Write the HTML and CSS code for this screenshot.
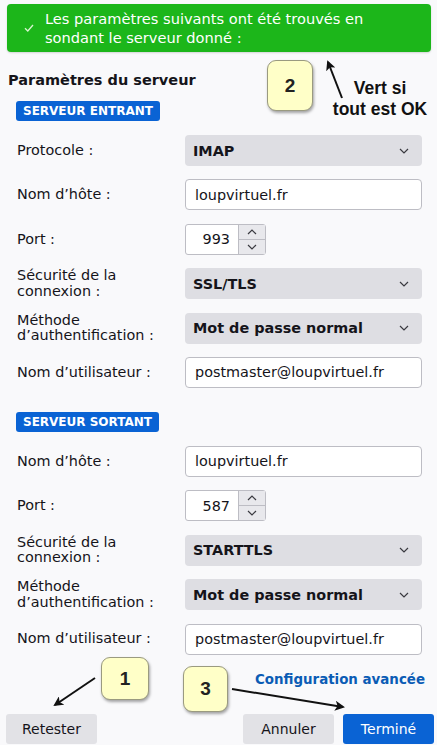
FILE: index.html
```html
<!DOCTYPE html>
<html lang="fr">
<head>
<meta charset="utf-8">
<link rel="stylesheet" href="styles.css">
</head>
<body>
<div class="page">
  <div class="banner">
    <svg class="check" width="10" height="8" viewBox="0 0 10 8"><path d="M1 4.2 L3.8 7 L9 1" fill="none" stroke="#d8f5d0" stroke-width="1.3"/></svg>
    <div class="banner-text">Les paramètres suivants ont été trouvés en<br>sondant le serveur donné :</div>
  </div>

  <h2 class="heading">Paramètres du serveur</h2>

  <div class="badge">SERVEUR ENTRANT</div>
  <div class="grid">
    <div class="label">Protocole :</div>
    <div class="select"><span>IMAP</span><svg class="chev" width="10" height="6" viewBox="0 0 10 6"><path d="M1 1 L5 5 L9 1" fill="none" stroke="#3a3a40" stroke-width="1.2"/></svg></div>

    <div class="label">Nom d’hôte :</div>
    <div class="input">loupvirtuel.fr</div>

    <div class="label">Port :</div>
    <div class="spin"><span class="spin-val">993</span><span class="spin-btns"><span class="sb"><svg width="10" height="6" viewBox="0 0 10 6"><path d="M1 5 L5 1 L9 5" fill="none" stroke="#3a3a40" stroke-width="1.2"/></svg></span><span class="sb"><svg width="10" height="6" viewBox="0 0 10 6"><path d="M1 1 L5 5 L9 1" fill="none" stroke="#3a3a40" stroke-width="1.2"/></svg></span></span></div>

    <div class="label">Sécurité de la<br>connexion :</div>
    <div class="select"><span>SSL/TLS</span><svg class="chev" width="10" height="6" viewBox="0 0 10 6"><path d="M1 1 L5 5 L9 1" fill="none" stroke="#3a3a40" stroke-width="1.2"/></svg></div>

    <div class="label">Méthode<br>d’authentification :</div>
    <div class="select"><span>Mot de passe normal</span><svg class="chev" width="10" height="6" viewBox="0 0 10 6"><path d="M1 1 L5 5 L9 1" fill="none" stroke="#3a3a40" stroke-width="1.2"/></svg></div>

    <div class="label">Nom d’utilisateur :</div>
    <div class="input">postmaster@loupvirtuel.fr</div>
  </div>

  <div class="badge badge-out">SERVEUR SORTANT</div>
  <div class="grid">
    <div class="label">Nom d’hôte :</div>
    <div class="input">loupvirtuel.fr</div>

    <div class="label">Port :</div>
    <div class="spin"><span class="spin-val">587</span><span class="spin-btns"><span class="sb"><svg width="10" height="6" viewBox="0 0 10 6"><path d="M1 5 L5 1 L9 5" fill="none" stroke="#3a3a40" stroke-width="1.2"/></svg></span><span class="sb"><svg width="10" height="6" viewBox="0 0 10 6"><path d="M1 1 L5 5 L9 1" fill="none" stroke="#3a3a40" stroke-width="1.2"/></svg></span></span></div>

    <div class="label">Sécurité de la<br>connexion :</div>
    <div class="select"><span>STARTTLS</span><svg class="chev" width="10" height="6" viewBox="0 0 10 6"><path d="M1 1 L5 5 L9 1" fill="none" stroke="#3a3a40" stroke-width="1.2"/></svg></div>

    <div class="label">Méthode<br>d’authentification :</div>
    <div class="select"><span>Mot de passe normal</span><svg class="chev" width="10" height="6" viewBox="0 0 10 6"><path d="M1 1 L5 5 L9 1" fill="none" stroke="#3a3a40" stroke-width="1.2"/></svg></div>

    <div class="label">Nom d’utilisateur :</div>
    <div class="input">postmaster@loupvirtuel.fr</div>
  </div>

  <div class="advanced"><a class="adv-link">Configuration avancée</a></div>

  <div class="footer">
    <button class="btn">Retester</button>
    <div class="spacer"></div>
    <button class="btn">Annuler</button>
    <button class="btn btn-primary">Terminé</button>
  </div>

  <div class="callout c2">2</div>
  <div class="note">Vert si<br>tout est OK</div>
  <div class="callout c1">1</div>
  <div class="callout c3">3</div>

  <svg class="arrows" width="437" height="745" viewBox="0 0 437 745">
    <defs>
      <marker id="ah" markerWidth="10" markerHeight="10" refX="8" refY="5" orient="auto" markerUnits="userSpaceOnUse">
        <path d="M0 0 L10 5 L0 10 L2.5 5 Z" fill="#111"/>
      </marker>
    </defs>
    <line x1="342" y1="98" x2="328" y2="62" stroke="#111" stroke-width="2" marker-end="url(#ah)"/>
    <line x1="95" y1="678" x2="55" y2="705" stroke="#111" stroke-width="2" marker-end="url(#ah)"/>
    <line x1="232" y1="689" x2="343" y2="707" stroke="#111" stroke-width="2" marker-end="url(#ah)"/>
  </svg>
</div>
</body>
</html>
```

FILE: styles.css
```css
html, body {
  margin: 0;
  padding: 0;
}
body {
  background: #f9f9fb;
  font-family: "DejaVu Sans", sans-serif;
  font-size: 14.4px;
  color: #15141a;
}
.page {
  position: relative;
  width: 437px;
  height: 745px;
  overflow: hidden;
}
.banner {
  margin: 4px 6px 0 7px;
  height: 48px;
  box-sizing: border-box;
  background: #1cb61a;
  border-radius: 4px;
  display: flex;
  align-items: center;
  color: #fff;
  box-shadow: 0 1px 2px rgba(0,0,0,0.15);
}
.check {
  margin-left: 17px;
  margin-right: 11px;
  flex: none;
}
.banner-text {
  font-size: 14.6px;
  line-height: 19px;
}
.heading {
  margin: 19px 0 0 8px;
  font-size: 14.5px;
  font-weight: bold;
  line-height: 18px;
}
.badge {
  display: inline-block;
  margin: 12px 0 0 16px;
  height: 20px;
  line-height: 20px;
  padding: 0 7px;
  background: #0a63d4;
  color: #fff;
  font-size: 12px;
  font-weight: bold;
  border-radius: 3px;
}
.badge-out {
  margin-top: 24px;
}
.grid {
  display: grid;
  grid-template-columns: 168px 237px;
  grid-auto-rows: 31px;
  row-gap: 13.4px;
  margin: 14px 0 0 17px;
}
.label {
  display: flex;
  align-items: center;
  line-height: 15.5px;
}
.select {
  background: #dedee3;
  border-radius: 4px;
  display: flex;
  align-items: center;
  justify-content: space-between;
  padding: 0 13px 0 8px;
  font-weight: bold;
}
.input {
  background: #fff;
  border: 1px solid #bdbdc4;
  border-radius: 4px;
  display: flex;
  align-items: center;
  padding: 0 9px;
}
.spin {
  width: 81px;
  box-sizing: border-box;
  background: #fff;
  border: 1px solid #bdbdc4;
  border-radius: 3px;
  display: flex;
}
.spin-val {
  flex: 1;
  display: flex;
  align-items: center;
  justify-content: flex-end;
  padding-right: 8px;
}
.spin-btns {
  width: 26px;
  display: flex;
  flex-direction: column;
  border-left: 1px solid #bdbdc4;
}
.sb {
  flex: 1;
  display: flex;
  align-items: center;
  justify-content: center;
  background: #e8e8ec;
}
.sb + .sb {
  border-top: 1px solid #bdbdc4;
}
.advanced {
  display: flex;
  justify-content: flex-end;
  margin: 16px 12px 0 0;
}
.adv-link {
  color: #0b5cb5;
  font-weight: bold;
  font-size: 13.4px;
  line-height: 18px;
}
.footer {
  display: flex;
  gap: 9px;
  margin: 25px 3px 0 6px;
}
.spacer {
  flex: 1;
}
.btn {
  width: 91px;
  height: 30px;
  border: none;
  border-radius: 3px;
  background: #e2e2e6;
  font-family: "DejaVu Sans", sans-serif;
  font-size: 14px;
  color: #15141a;
}
.btn-primary {
  background: #0a63d4;
  color: #fff;
}
.callout {
  position: absolute;
  box-sizing: border-box;
  background: #ffffc8;
  border: 1px solid #9a9a80;
  border-radius: 9px;
  box-shadow: 1px 2px 3px rgba(0,0,0,0.35);
  display: flex;
  align-items: center;
  justify-content: center;
  font-family: "Liberation Sans", Arial, sans-serif;
  font-weight: bold;
  font-size: 19px;
  color: #222;
}
.c2 { left: 267px; top: 60px; width: 46px; height: 51px; }
.c1 { left: 101px; top: 657px; width: 48px; height: 43px; }
.c3 { left: 183px; top: 666px; width: 45px; height: 46px; }
.note {
  position: absolute;
  left: 329px;
  top: 78px;
  width: 102px;
  text-align: center;
  font-family: "Liberation Sans", Arial, sans-serif;
  font-weight: bold;
  font-size: 17.5px;
  line-height: 21px;
  color: #111;
}
.arrows {
  position: absolute;
  left: 0;
  top: 0;
  pointer-events: none;
}
```
